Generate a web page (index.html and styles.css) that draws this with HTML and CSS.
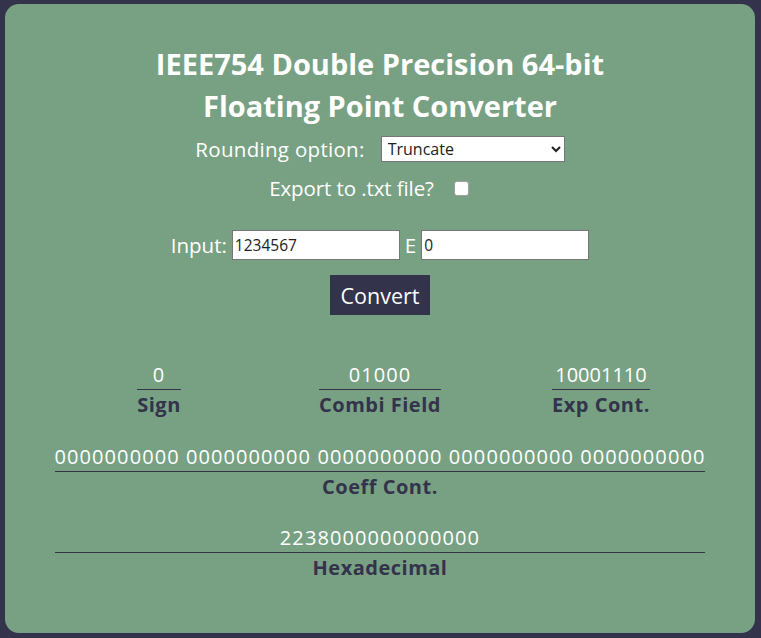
FILE: index.html
```html
<!DOCTYPE html>
<html lang="en">
<head>
<meta charset="utf-8">
<title>IEEE754 Converter</title>
<link rel="stylesheet" href="styles.css">
</head>
<body>
<main class="card">
  <h1 class="title">IEEE754 Double Precision 64-bit<br>Floating Point Converter</h1>
  <div class="row row-round">
    <label class="lbl" for="round">Rounding option:</label>
    <select id="round" class="select">
      <option>Truncate</option>
    </select>
  </div>
  <div class="row row-export">
    <label class="lbl" for="exp">Export to .txt file?</label>
    <input id="exp" class="check" type="checkbox">
  </div>
  <div class="row row-input">
    <label class="lbl" for="num">Input:</label>
    <input id="num" class="text" type="text" value="1234567">
    <span class="lbl e">E</span>
    <input class="text" type="text" value="0">
  </div>
  <button class="btn" type="button">Convert</button>

  <div class="fields">
    <div class="cell">
      <div class="field">
        <div class="val">0</div>
        <div class="name">Sign</div>
      </div>
    </div>
    <div class="cell">
      <div class="field">
        <div class="val">01000</div>
        <div class="name">Combi Field</div>
      </div>
    </div>
    <div class="cell">
      <div class="field">
        <div class="val val-tight">10001110</div>
        <div class="name">Exp Cont.</div>
      </div>
    </div>
  </div>

  <div class="wide">
    <div class="field block">
      <div class="val">0000000000 0000000000 0000000000 0000000000 0000000000</div>
      <div class="name">Coeff Cont.</div>
    </div>
    <div class="field block">
      <div class="val">2238000000000000</div>
      <div class="name">Hexadecimal</div>
    </div>
  </div>
</main>
</body>
</html>
```
FILE: styles.css
```css
html, body {
  margin: 0;
  padding: 0;
  background: #33334b;
}
body {
  padding: 4px 6px 5px 5px;
  font-family: "Open Sans", "Noto Sans", sans-serif;
}
.card {
  background: #78a183;
  border-radius: 14px;
  height: 629px;
  box-sizing: border-box;
  padding-top: 39px;
  display: flex;
  flex-direction: column;
  align-items: center;
  color: #fff;
}
.title {
  margin: 0;
  font-size: 29px;
  line-height: 42px;
  font-weight: 700;
  text-align: center;
}
.row {
  display: flex;
  align-items: center;
  height: 26px;
}
.lbl {
  font-size: 20.5px;
  color: #fff;
}
.row-round {
  margin-top: 9px;
  gap: 16px;
}
.row-round .lbl {
  letter-spacing: 0.3px;
}
.select {
  width: 184px;
  height: 26px;
  font-family: inherit;
  font-size: 16px;
  color: #222;
  background: #fff;
  border: 1px solid #767676;
  border-radius: 0;
  padding: 0 2px;
}
.row-export {
  margin-top: 13px;
  gap: 20px;
  padding-right: 22px;
}
.row-export .lbl {
  letter-spacing: -0.1px;
}
.check {
  appearance: none;
  -webkit-appearance: none;
  flex: 0 0 15px;
  box-sizing: border-box;
  width: 15px;
  height: 15px;
  margin: 0;
  background: #fff;
  border: 1px solid #a0a0a0;
  border-radius: 3px;
}
.row-input {
  margin-top: 29px;
  height: 30px;
  gap: 5px;
}
.text {
  width: 168px;
  height: 30px;
  box-sizing: border-box;
  border: 1px solid #767676;
  padding: 0 2px;
  font-family: inherit;
  font-size: 15.5px;
  color: #222;
  background: #fff;
}
.e {
  margin: 0;
}
.btn {
  margin-top: 15px;
  width: 100px;
  height: 40px;
  background: #33334b;
  color: #fff;
  border: 0;
  font-family: inherit;
  font-size: 21.5px;
  padding: 0;
}
.fields {
  margin-top: 45px;
  width: 663px;
  display: grid;
  grid-template-columns: repeat(3, 1fr);
}
.cell {
  display: flex;
  justify-content: center;
}
.field {
  display: inline-flex;
  flex-direction: column;
  align-items: stretch;
  text-align: center;
  font-size: 20px;
}
.val {
  color: #fff;
  line-height: 29px;
  letter-spacing: 1.08px;
  border-bottom: 1px solid #33334b;
}
.val-tight {
  letter-spacing: 0;
}
.name {
  color: #33334b;
  font-weight: 700;
  line-height: 30px;
  letter-spacing: 0.5px;
}
.wide {
  margin-top: 22px;
  display: inline-flex;
  flex-direction: column;
  gap: 21px;
}
.block {
  display: flex;
}
```
